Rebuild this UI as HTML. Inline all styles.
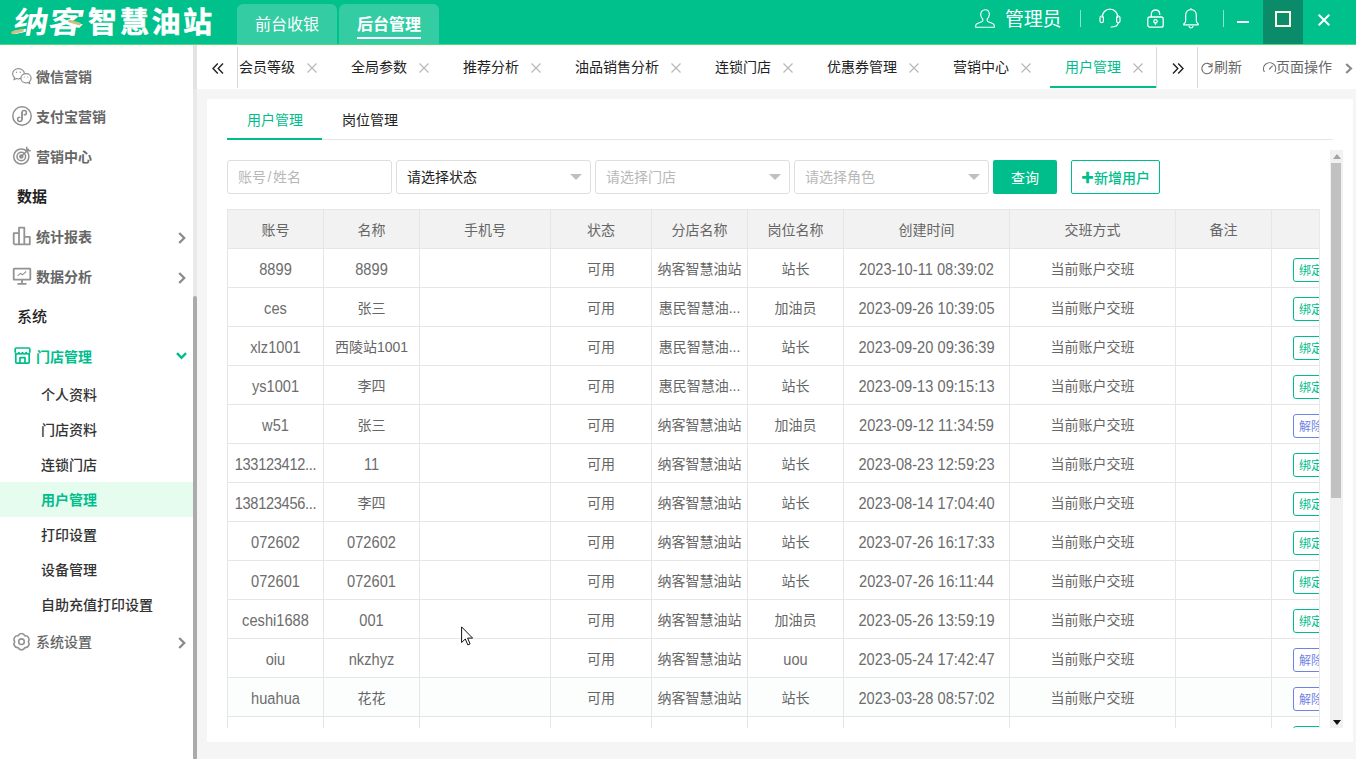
<!DOCTYPE html>
<html lang="zh-CN">
<head>
<meta charset="utf-8">
<title>纳客智慧油站</title>
<style>
*{box-sizing:border-box;margin:0;padding:0}
html,body{width:1356px;height:759px;overflow:hidden}
body{position:relative;background:#f5f5f5;font-family:"Liberation Sans","Noto Sans CJK SC",sans-serif;font-size:14px;color:#333}
.abs{position:absolute}
svg{display:block;overflow:visible}
/* header */
#hd{position:absolute;left:0;top:0;width:1356px;height:45px;background:#00c08c;border-bottom:1px solid #55d97a}
#logo1{position:absolute;left:10px;top:0;height:44px;line-height:46px;font-size:30px;font-weight:700;color:#fff;transform:skewX(-10deg) scaleX(1.165);transform-origin:left bottom;letter-spacing:0;white-space:nowrap}
#logo2{position:absolute;left:88px;top:0;height:44px;line-height:46px;font-size:29px;font-weight:700;-webkit-text-stroke:.5px #fff;color:#fff;letter-spacing:2.700px;white-space:nowrap}
.htab{position:absolute;top:4px;height:40px;width:100px;background:rgba(255,255,255,.2);border-radius:6px 6px 0 0;color:#fff;font-size:16px;text-align:center;line-height:42px}
.htab span{display:inline-block;line-height:20px;padding-bottom:3px}
.htab.on span{border-bottom:2px solid #fff;font-weight:700;padding-bottom:2px}
#uname{position:absolute;left:1005px;top:0;height:44px;line-height:39px;font-size:19px;letter-spacing:-.3px;color:#fff;white-space:nowrap}
.vdiv{position:absolute;width:1px;background:rgba(255,255,255,.55)}
/* sidebar */
#sb{position:absolute;left:0;top:45px;width:193px;height:714px;background:#fff}
.mi{position:absolute;left:0;width:193px;height:40px;line-height:40px;font-size:14px;font-weight:700;color:#666;white-space:nowrap}
.mi .t{position:absolute;left:36px;top:0}
.mi svg{position:absolute}
.mh{position:absolute;left:17px;height:40px;line-height:40px;font-size:15px;font-weight:700;color:#222;white-space:nowrap}
.si{position:absolute;left:0;width:193px;height:35px;line-height:36px;font-size:14px;font-weight:500;color:#333;white-space:nowrap;padding-left:41px}
.si.on{background:#e6fcee;color:#00be8c;font-weight:700}
/* tab bar */
#tb{position:absolute;left:198px;top:45px;width:1158px;height:44px;background:#fff}
.tab{position:absolute;top:0;height:44px;line-height:44px;font-size:14px;color:#222;white-space:nowrap}
.tab.on{color:#00be8c}
.tx{position:absolute;top:18px;width:10px;height:10px}
/* card */
#card{position:absolute;left:207px;top:99px;width:1146px;height:643px;background:#fff}
.inp{position:absolute;top:160px;height:34px;border:1px solid #dfdfdf;border-radius:3px;background:#fff;line-height:32px;font-size:14px;padding-left:10px;white-space:nowrap}
.ph{color:#b8b8b8}
.caret{position:absolute;right:8px;top:13px;width:0;height:0;border:6px solid transparent;border-top-color:#c0c0c0;border-bottom-width:0}
/* table */
#tbl{position:absolute;left:227px;top:209px;width:1093px;height:519px;overflow:hidden;border-left:1px solid #e6e6e6;border-top:1px solid #e6e6e6;border-right:1px solid #e9e9e9}
.r{display:flex;height:39px;width:1300px}
.r>div{flex:none;height:39px;line-height:40px;border-right:1px solid #e6e6e6;border-bottom:1px solid #e6e6e6;text-align:center;font-size:14px;color:#666;white-space:nowrap;overflow:hidden}
.r.h>div{background:#f2f2f2;line-height:40px}
.r>div.l{font-size:14.600px;letter-spacing:.03px}
.r>div.l span{display:inline-block;line-height:17px;transform:scaleY(1.1);transform-origin:50% 78%;vertical-align:baseline;position:relative;top:1px;color:#6c6c6c}
.r.hv>div{background:#fcfefe}
.r>div:nth-child(1){width:96px}.r>div:nth-child(2){width:96px}.r>div:nth-child(3){width:131px}.r>div:nth-child(4){width:101px}.r>div:nth-child(5){width:96px}.r>div:nth-child(6){width:96px}.r>div:nth-child(7){width:166px}.r>div:nth-child(8){width:166px}.r>div:nth-child(9){width:96px}.r>div:nth-child(10){width:160px;text-align:left;padding-left:21px}
.btn{display:inline-block;height:24px;line-height:25px;border:1px solid #00be8c;color:#00be8c;border-radius:3px;font-size:12px;padding:0 5px;background:#fff;vertical-align:middle;overflow:hidden;position:relative;top:0}
.btn.b{border-color:#6f83e6;color:#6f83e6}
</style>
</head>
<body>
<!-- HEADER -->
<div id="hd">
  <div id="logo1">纳客</div>
  <div id="logo2">智慧油站</div>
  <div class="abs" style="left:11px;top:30px;width:13px;height:3px;background:#cbbf84;transform:rotate(-14deg);border-radius:2px"></div>
  <div class="abs" style="left:68px;top:21px;width:13px;height:3px;background:#cbbf84;transform:rotate(16deg);border-radius:2px"></div>
  <div class="htab" style="left:237px">前台收银</div>
  <div class="htab on" style="left:339px"><span>后台管理</span></div>
  <div id="uname">管理员</div>
  <svg class="abs" style="left:975px;top:9px" width="20" height="19" viewBox="0 0 20 19" fill="none" stroke="#fff" stroke-width="1.1" stroke-linejoin="round"><path d="M10 .8c2.6 0 4.3 2 4.3 4.6 0 2-.9 3.7-2.100 4.600v1.500c0 .6.400 1 1.100 1.300l4.300 1.700c1.100.4 1.700 1.100 1.700 2.200v1.500H.7v-1.500c0-1.100.6-1.800 1.700-2.200l4.300-1.700c.7-.3 1.100-.7 1.100-1.300V10C6.600 9.100 5.700 7.400 5.700 5.400 5.700 2.800 7.400.8 10 .8z"/></svg>
  <div class="vdiv" style="left:1080px;top:10px;height:17px"></div>
  <svg class="abs" style="left:1099px;top:8px" width="22" height="20" viewBox="0 0 22 20" fill="none" stroke="#fff" stroke-width="1.2" stroke-linecap="round"><path d="M3.200 9.500C3.200 4.600 6.500 1.200 11 1.200s7.800 3.400 7.800 8.300"/><rect x="1" y="8" width="3.400" height="6.600" rx="1.700"/><rect x="17.600" y="8" width="3.400" height="6.600" rx="1.700"/><path d="M19.300 14.600c-.4 2.600-3.200 4.400-7.300 4.400"/></svg>
  <svg class="abs" style="left:1147px;top:9px" width="17" height="19" viewBox="0 0 17 19" fill="none" stroke="#fff" stroke-width="1.3"><path d="M4.300 8V5.200C4.300 2.600 6 1 8.500 1s4.200 1.600 4.200 4.200V6"/><rect x=".8" y="8" width="15.400" height="10.200" rx="2"/><circle cx="8.500" cy="12.300" r="1.700"/><path d="M8.500 14v1.800"/></svg>
  <svg class="abs" style="left:1183px;top:8px" width="16" height="21" viewBox="0 0 16 21" fill="none" stroke="#fff" stroke-width="1.200" stroke-linecap="round" stroke-linejoin="round"><path d="M8 1.600v-1M8 1.600c3.200 0 5.300 2.400 5.300 5.600v5.600c0 1.300.8 2.300 2 3.200v.8H.7V16c1.200-.9 2-1.900 2-3.200V7.200C2.700 4 4.800 1.600 8 1.600z"/><path d="M6 18.300c.3 1 1 1.600 2 1.600s1.700-.6 2-1.600"/></svg>
  <div class="vdiv" style="left:1223px;top:10px;height:17px"></div>
  <div class="abs" style="left:1237px;top:21px;width:12px;height:2px;background:#fff"></div>
  <div class="abs" style="left:1263px;top:0;width:40px;height:44px;background:#0a8c6a"></div>
  <div class="abs" style="left:1275px;top:11px;width:16px;height:16px;border:2px solid #fdfde6"></div>
  <svg class="abs" style="left:1318px;top:14px" width="12" height="12" viewBox="0 0 12 12" stroke="#fff" stroke-width="2" fill="none"><path d="M.7.700l10.600 10.600M11.300.7L.7 11.300"/></svg>
</div>
<!-- SIDEBAR -->
<div id="sb">
  <div class="mi" style="top:12px"><svg style="left:12px;top:11px" width="20" height="16" viewBox="0 0 20 16" fill="none" stroke="#8f8f8f" stroke-width="1.200" stroke-linejoin="round"><path d="M2.600 9.700C1.400 8.700.6 7.300.6 5.700.6 2.900 3.200.6 6.500.6s5.900 2.300 5.900 5.100-2.600 5.100-5.900 5.100c-.7 0-1.400-.1-2-.3L2 11.800z" fill="#fff"/><path d="M17.300 13.700c1.100-.8 1.800-2.100 1.800-3.500 0-2.600-2.300-4.600-5.100-4.600S8.900 7.600 8.900 10.200s2.300 4.600 5.100 4.600c.6 0 1.200-.1 1.700-.3l2.200 1.100z" fill="#fff"/><circle cx="4.500" cy="4.300" r=".7" fill="#8f8f8f" stroke="none"/><circle cx="8.300" cy="4.300" r=".7" fill="#8f8f8f" stroke="none"/><circle cx="12.300" cy="9" r=".6" fill="#8f8f8f" stroke="none"/><circle cx="15.700" cy="9" r=".6" fill="#8f8f8f" stroke="none"/></svg><span class="t">微信营销</span></div>
  <div class="mi" style="top:52px"><svg style="left:12px;top:9px" width="20" height="20" viewBox="0 0 20 20" fill="none" stroke="#909090" stroke-width="1.500" stroke-linecap="round"><circle cx="10" cy="10" r="9.200"/><path d="M10 13.200V6.800c0-1.300 1-2.200 2.200-2.200 1.300 0 2.200.9 2.200 2.100 0 1.300-.9 2.100-2.200 2.100"/><path d="M10 6.800v6.400c0 1.300-1 2.200-2.200 2.200-1.300 0-2.200-.9-2.200-2.100 0-1.300.9-2.100 2.200-2.100"/></svg><span class="t">支付宝营销</span></div>
  <div class="mi" style="top:92px"><svg style="left:13px;top:9px" width="18" height="19" viewBox="0 0 18 19" fill="none" stroke="#909090" stroke-width="1.500" stroke-linecap="round"><circle cx="8.300" cy="10.500" r="7.600"/><circle cx="8.300" cy="10.500" r="4.300"/><circle cx="8.300" cy="10.500" r="1.500" fill="#8f8f8f"/><path d="M8.300 10.500l7.200-7.200M13.800 1.200v3.600h3.400" /></svg><span class="t">营销中心</span></div>
  <div class="mh" style="top:132px">数据</div>
  <div class="mi" style="top:172px"><svg style="left:13px;top:10px" width="18" height="18" viewBox="0 0 18 18" fill="none" stroke="#939393" stroke-width="1.800" stroke-linejoin="round"><path d="M.7 17.300V6.200h5.300v11.100M6 17.300V.7h5.300v16.600M11.300 17.300V9.800h5.500v7.500zM.7 17.300h16"/></svg><span class="t">统计报表</span><svg style="left:178px;top:15px" width="8" height="12" viewBox="0 0 8 12" fill="none" stroke="#8a8a8a" stroke-width="2.300"><path d="M1.200 1l5 5-5 5"/></svg></div>
  <div class="mi" style="top:212px"><svg style="left:13px;top:11px" width="18" height="17" viewBox="0 0 18 17" fill="none" stroke="#939393" stroke-width="1.800" stroke-linejoin="round"><rect x=".7" y=".7" width="16.600" height="11" rx=".5"/><path d="M9 11.700v4M4.500 15.800h9"/><path d="M4.500 7.800l3-2.500 2 1.500 3.600-3.300" stroke-width="1.100"/></svg><span class="t">数据分析</span><svg style="left:178px;top:15px" width="8" height="12" viewBox="0 0 8 12" fill="none" stroke="#8a8a8a" stroke-width="2.300"><path d="M1.200 1l5 5-5 5"/></svg></div>
  <div class="mh" style="top:252px;font-weight:500;left:17px">系统</div>
  <div class="mi" style="top:292px;color:#00be8c"><svg style="left:14px;top:10px" width="17" height="17" viewBox="0 0 17 17" fill="none" stroke="#00be8c" stroke-width="1.700" stroke-linejoin="round"><path d="M1.200 5.500V2c0-.6.400-1 1-1h12.600c.6 0 1 .4 1 1v3.500"/><path d="M1.200 5.500c.3 1 1 1.500 1.900 1.500s1.600-.5 1.800-1.500c.2 1 .9 1.500 1.800 1.500s1.600-.5 1.800-1.500c.2 1 .9 1.500 1.800 1.500s1.600-.5 1.800-1.500c.2 1 .9 1.500 1.800 1.500s1.600-.5 1.900-1.500"/><path d="M1.800 7v8.200c0 .5.400.9.900.9h11.600c.5 0 .9-.4.900-.9V7"/><path d="M6 16v-5.300h5V16"/></svg><span class="t">门店管理</span><svg style="left:176px;top:15px" width="11" height="8" viewBox="0 0 11 8" fill="none" stroke="#00be8c" stroke-width="2.400"><path d="M1 1.200l4.500 4.600L10 1.200"/></svg></div>
  <div class="si" style="top:332px">个人资料</div>
  <div class="si" style="top:367px">门店资料</div>
  <div class="si" style="top:402px">连锁门店</div>
  <div class="si on" style="top:437px">用户管理</div>
  <div class="si" style="top:472px">打印设置</div>
  <div class="si" style="top:507px">设备管理</div>
  <div class="si" style="top:542px">自助充值打印设置</div>
  <div class="mi" style="top:577px;font-weight:500"><svg style="left:12px;top:10px" width="19" height="19" viewBox="0 0 19 19" fill="none" stroke="#939393" stroke-width="1.600" stroke-linejoin="round"><path d="M6.10 3.81A3.7 3.7 0 0 1 12.90 3.81A3.7 3.7 0 0 1 16.30 9.70A3.7 3.7 0 0 1 12.90 15.59A3.7 3.7 0 0 1 6.10 15.59A3.7 3.7 0 0 1 2.70 9.70A3.7 3.7 0 0 1 6.10 3.81z"/><circle cx="9.500" cy="9.700" r="2.800"/></svg><span class="t">系统设置</span><svg style="left:178px;top:15px" width="8" height="12" viewBox="0 0 8 12" fill="none" stroke="#8a8a8a" stroke-width="2.300"><path d="M1.200 1l5 5-5 5"/></svg></div>
</div>
<div class="abs" style="left:193px;top:45px;width:4px;height:714px;background:#e9e9e9"></div>
<div class="abs" style="left:193px;top:45px;width:4px;height:44px;background:#e3e3e3"></div>
<div class="abs" style="left:197px;top:45px;width:1px;height:44px;background:#fff"></div>
<div class="abs" style="left:193px;top:296px;width:4px;height:463px;background:#ababab;border-radius:2px 2px 0 0"></div>
<!-- TAB BAR -->
<div id="tb">
  <div class="tab" style="left:41px">会员等级</div><svg class="tx" style="left:109px" viewBox="0 0 10 10" fill="none" stroke="#b8b8b8" stroke-width="1.200"><path d="M.5.500l9 9M9.500.5l-9 9"/></svg>
  <div class="tab" style="left:153px">全局参数</div><svg class="tx" style="left:221px" viewBox="0 0 10 10" fill="none" stroke="#b8b8b8" stroke-width="1.200"><path d="M.5.500l9 9M9.500.5l-9 9"/></svg>
  <div class="tab" style="left:265px">推荐分析</div><svg class="tx" style="left:333px" viewBox="0 0 10 10" fill="none" stroke="#b8b8b8" stroke-width="1.200"><path d="M.5.500l9 9M9.500.5l-9 9"/></svg>
  <div class="tab" style="left:377px">油品销售分析</div><svg class="tx" style="left:473px" viewBox="0 0 10 10" fill="none" stroke="#b8b8b8" stroke-width="1.200"><path d="M.5.500l9 9M9.500.5l-9 9"/></svg>
  <div class="tab" style="left:517px">连锁门店</div><svg class="tx" style="left:585px" viewBox="0 0 10 10" fill="none" stroke="#b8b8b8" stroke-width="1.200"><path d="M.5.500l9 9M9.500.5l-9 9"/></svg>
  <div class="tab" style="left:629px">优惠券管理</div><svg class="tx" style="left:711px" viewBox="0 0 10 10" fill="none" stroke="#b8b8b8" stroke-width="1.200"><path d="M.5.500l9 9M9.500.5l-9 9"/></svg>
  <div class="tab" style="left:755px">营销中心</div><svg class="tx" style="left:823px" viewBox="0 0 10 10" fill="none" stroke="#b8b8b8" stroke-width="1.200"><path d="M.5.500l9 9M9.500.5l-9 9"/></svg>
  <div class="tab on" style="left:867px">用户管理</div><svg class="tx" style="left:935px" viewBox="0 0 10 10" fill="none" stroke="#b8b8b8" stroke-width="1.200"><path d="M.5.500l9 9M9.500.5l-9 9"/></svg>
  <div class="abs" style="left:852px;top:41px;width:106px;height:2px;background:#00be8c"></div>
  <div class="abs" style="left:0;top:0;width:39px;height:44px;background:#fff"></div>
  <svg class="abs" style="left:14px;top:17.500px" width="12" height="11" viewBox="0 0 12 11" fill="none" stroke="#222" stroke-width="1.400"><path d="M5.800.6L1 5.500l4.800 4.900M11 .6L6.200 5.500l4.800 4.900"/></svg>
  <div class="abs" style="left:39px;top:2px;width:1px;height:41px;background:#d8d8d8"></div>
  <div class="abs" style="left:959px;top:0;width:199px;height:44px;background:#fff"></div>
  <div class="abs" style="left:958px;top:2px;width:1px;height:41px;background:#d8d8d8"></div>
  <svg class="abs" style="left:974px;top:18px" width="12" height="11" viewBox="0 0 12 11" fill="none" stroke="#222" stroke-width="1.400"><path d="M1 .6l4.800 4.900L1 10.400M6.200.6L11 5.500l-4.800 4.900"/></svg>
  <div class="abs" style="left:999px;top:2px;width:1px;height:41px;background:#d8d8d8"></div>
  <svg class="abs" style="left:1003px;top:16.500px" width="12" height="12" viewBox="0 0 12 12" fill="none" stroke="#6a6a6a" stroke-width="1.100"><path d="M10.700 4.300A5.200 5.200 0 1 0 11.200 6.400"/><path d="M11 .9v3.700H7.300"/></svg>
  <div class="tab" style="left:1016px;color:#666">刷新</div>
  <svg class="abs" style="left:1065px;top:16.500px" width="14" height="11" viewBox="0 0 14 11" fill="none" stroke="#6a6a6a" stroke-width="1.100"><path d="M1.43 10.03A6.1 6.1 0 1 1 11.77 10.03"/><path d="M6.200 7.300l3.400-3.600"/></svg>
  <div class="tab" style="left:1078px;color:#666">页面操作</div>
  <svg class="abs" style="left:1146.500px;top:17.500px" width="8" height="11" viewBox="0 0 8 11" fill="none" stroke="#8a8a8a" stroke-width="2.200"><path d="M1.200 1l4.800 4.500L1.200 10"/></svg>
</div>
<!-- CARD -->
<div id="card"></div>
<div class="abs" style="left:227px;top:139px;width:1106px;height:1px;background:#e6e6e6"></div>
<div class="abs" style="left:227px;top:138px;width:95px;height:2px;background:#00be8c"></div>
<div class="abs" style="left:247px;top:100px;height:40px;line-height:40px;font-size:14px;color:#00be8c;white-space:nowrap">用户管理</div>
<div class="abs" style="left:342px;top:100px;height:40px;line-height:40px;font-size:14px;color:#222;white-space:nowrap">岗位管理</div>
<div class="inp ph" style="left:227px;width:165px">账号<span style="margin:0 1.500px">/</span>姓名</div>
<div class="inp" style="left:396px;width:195px;color:#222">请选择状态<i class="caret"></i></div>
<div class="inp ph" style="left:595px;width:195px">请选择门店<i class="caret"></i></div>
<div class="inp ph" style="left:794px;width:195px">请选择角色<i class="caret"></i></div>
<div class="abs" style="left:993px;top:160px;width:64px;height:34px;background:#00be8c;color:#fff;font-size:14px;line-height:36px;text-align:center;border-radius:2px">查询</div>
<div class="abs" style="left:1071px;top:160px;width:89px;height:34px;background:#fff;border:1px solid #00be8c;color:#00be8c;font-size:14px;line-height:34px;text-align:center;border-radius:2px;white-space:nowrap;font-weight:500"><b style="font-size:13px;position:relative;top:-1px">✚</b>新增用户</div>
<div id="tbl">
<div class="r h"><div>账号</div><div>名称</div><div>手机号</div><div>状态</div><div>分店名称</div><div>岗位名称</div><div>创建时间</div><div>交班方式</div><div>备注</div><div></div></div>
<div class="r"><div class="l"><span>8899</span></div><div class="l"><span>8899</span></div><div></div><div>可用</div><div>纳客智慧油站</div><div>站长</div><div class="l"><span>2023-10-11 08:39:02</span></div><div>当前账户交班</div><div></div><div><span class="btn">绑定微信</span></div></div>
<div class="r"><div class="l"><span>ces</span></div><div>张三</div><div></div><div>可用</div><div>惠民智慧油...</div><div>加油员</div><div class="l"><span>2023-09-26 10:39:05</span></div><div>当前账户交班</div><div></div><div><span class="btn">绑定微信</span></div></div>
<div class="r"><div class="l"><span>xlz1001</span></div><div>西陵站1001</div><div></div><div>可用</div><div>惠民智慧油...</div><div>站长</div><div class="l"><span>2023-09-20 09:36:39</span></div><div>当前账户交班</div><div></div><div><span class="btn">绑定微信</span></div></div>
<div class="r"><div class="l"><span>ys1001</span></div><div>李四</div><div></div><div>可用</div><div>惠民智慧油...</div><div>站长</div><div class="l"><span>2023-09-13 09:15:13</span></div><div>当前账户交班</div><div></div><div><span class="btn">绑定微信</span></div></div>
<div class="r"><div class="l"><span>w51</span></div><div>张三</div><div></div><div>可用</div><div>纳客智慧油站</div><div>加油员</div><div class="l"><span>2023-09-12 11:34:59</span></div><div>当前账户交班</div><div></div><div><span class="btn b">解除绑定</span></div></div>
<div class="r"><div class="l"><span style="letter-spacing:-.3px">133123412...</span></div><div class="l"><span>11</span></div><div></div><div>可用</div><div>纳客智慧油站</div><div>站长</div><div class="l"><span>2023-08-23 12:59:23</span></div><div>当前账户交班</div><div></div><div><span class="btn">绑定微信</span></div></div>
<div class="r"><div class="l"><span style="letter-spacing:-.3px">138123456...</span></div><div>李四</div><div></div><div>可用</div><div>纳客智慧油站</div><div>站长</div><div class="l"><span>2023-08-14 17:04:40</span></div><div>当前账户交班</div><div></div><div><span class="btn">绑定微信</span></div></div>
<div class="r"><div class="l"><span>072602</span></div><div class="l"><span>072602</span></div><div></div><div>可用</div><div>纳客智慧油站</div><div>站长</div><div class="l"><span>2023-07-26 16:17:33</span></div><div>当前账户交班</div><div></div><div><span class="btn">绑定微信</span></div></div>
<div class="r"><div class="l"><span>072601</span></div><div class="l"><span>072601</span></div><div></div><div>可用</div><div>纳客智慧油站</div><div>站长</div><div class="l"><span>2023-07-26 16:11:44</span></div><div>当前账户交班</div><div></div><div><span class="btn">绑定微信</span></div></div>
<div class="r"><div class="l"><span>ceshi1688</span></div><div class="l"><span>001</span></div><div></div><div>可用</div><div>纳客智慧油站</div><div>加油员</div><div class="l"><span>2023-05-26 13:59:19</span></div><div>当前账户交班</div><div></div><div><span class="btn">绑定微信</span></div></div>
<div class="r"><div class="l"><span>oiu</span></div><div class="l"><span>nkzhyz</span></div><div></div><div>可用</div><div>纳客智慧油站</div><div class="l"><span>uou</span></div><div class="l"><span>2023-05-24 17:42:47</span></div><div>当前账户交班</div><div></div><div><span class="btn b">解除绑定</span></div></div>
<div class="r hv"><div class="l"><span>huahua</span></div><div>花花</div><div></div><div>可用</div><div>纳客智慧油站</div><div>站长</div><div class="l"><span>2023-03-28 08:57:02</span></div><div>当前账户交班</div><div></div><div><span class="btn b">解除绑定</span></div></div>
<div class="r"><div></div><div></div><div></div><div></div><div></div><div></div><div></div><div></div><div></div><div><span class="btn">绑定微信</span></div></div>
</div>
<svg class="abs" style="left:461px;top:626px" width="13" height="20" viewBox="0 0 13 20"><path d="M.6.900v15.600l3.700-3.500 2.500 5.900 2.300-1-2.500-5.800h5z" fill="#fff" stroke="#111" stroke-width="1" stroke-linejoin="miter"/></svg>
<!-- scrollbar -->
<div class="abs" style="left:1330px;top:150px;width:13px;height:578px;background:#f1f1f1"></div>
<div class="abs" style="left:1331px;top:163px;width:10px;height:335px;background:#c1c1c1"></div>
<div class="abs" style="left:1333px;top:154px;width:0;height:0;border:4px solid transparent;border-top-width:0;border-bottom:5px solid #a3a3a3"></div>
<div class="abs" style="left:1333px;top:720px;width:0;height:0;border:4px solid transparent;border-bottom-width:0;border-top:5px solid #111"></div>
</body>
</html>
